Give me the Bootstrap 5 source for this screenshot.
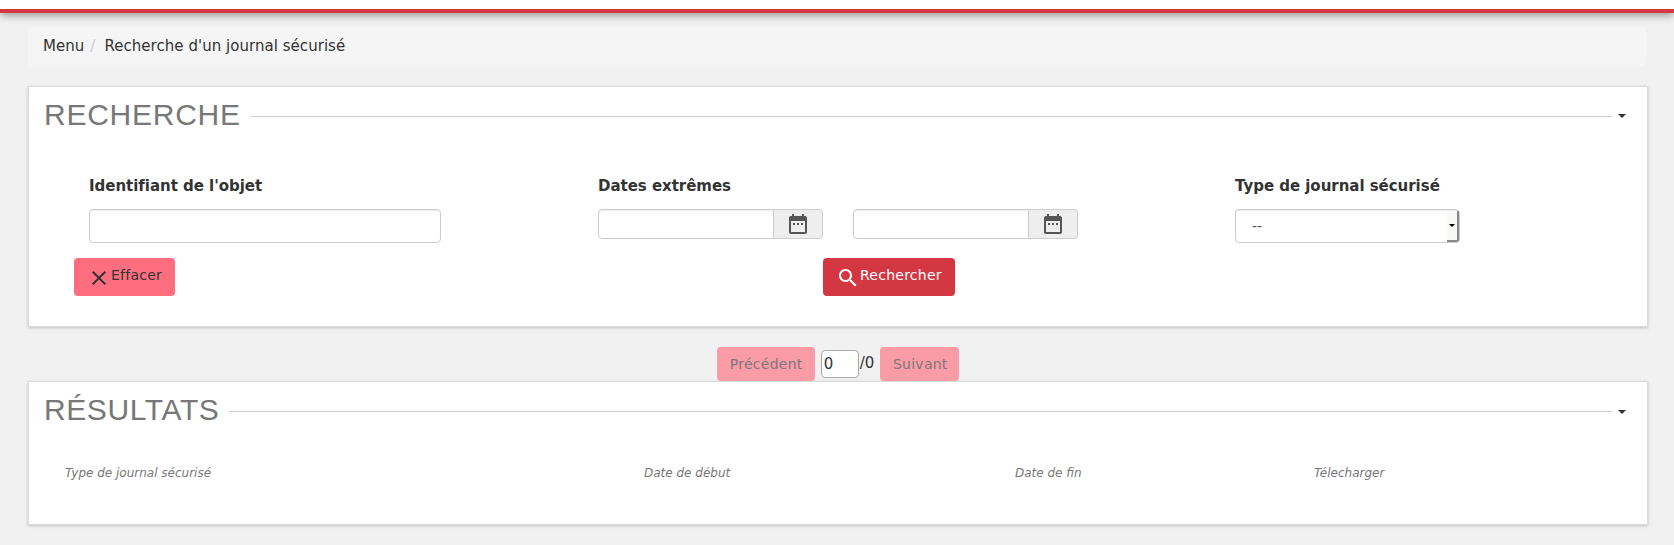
<!DOCTYPE html>
<html lang="fr">
<head>
<meta charset="utf-8">
<title>Recherche d'un journal sécurisé</title>
<link href="https://cdn.jsdelivr.net/npm/bootstrap@5.3.0/dist/css/bootstrap.min.css" rel="stylesheet">
<style>
body{background:#f1f1f1;color:#333;font:15px/20px "DejaVu Sans",sans-serif}
.topbar{height:13px;background:#fff;border-bottom:4px solid #d33742;box-shadow:0 2px 8px rgba(0,0,0,.4)}
.page{padding:14px 28px 20px}
.breadcrumb{--bs-breadcrumb-bg:#f5f5f5;--bs-breadcrumb-padding-x:15px;--bs-breadcrumb-border-radius:4px;height:39px;padding-top:9px;margin:0 0 21px;letter-spacing:.04px}
.breadcrumb-item+.breadcrumb-item{padding-left:6px}
.breadcrumb-item+.breadcrumb-item::before{color:#ccc;padding-right:9px}
.panel-box{background:#fff;margin:0 -1px 0 1px;box-shadow:0 0 0 1px #dcdcdc,0 1px 3px 1px rgba(0,0,0,.2)}
.panel-search{height:239px}
.panel-results{height:142px}
.panel-title{height:59px;padding:0 21px 0 15px}
.panel-title h2{font:30px/34px "Liberation Sans",Arial,sans-serif;letter-spacing:.75px;color:#777;margin:11px 10px 0 0}
.panel-results h2{letter-spacing:.6px}
.rule{height:1px;background:#ccc;margin-top:29px}
.toggle-caret{border:4px solid transparent;border-top-color:#333;border-bottom:0;margin:27px 0 0 6px}
.panel-results .toggle-caret{margin-top:28px}
.search-grid{display:grid;grid-template-columns:509px 255px 382px 225px;padding:30px 0 0 60px}
.search-grid label{font-weight:700;line-height:20px;margin-bottom:13px;letter-spacing:-.03px}
.form-control{border:1px solid #ccc;border-radius:4px;box-shadow:inset 0 1px 1px rgba(0,0,0,.075);padding:0}
.id-input{width:352px;height:34px}
.date-group{width:225px;height:30px}
.date-group .form-control{height:30px;min-height:0}
.date-group .input-group-text{width:50px;background:#eee;border-color:#ccc;border-radius:4px;padding:0;justify-content:center}
.type-select{width:225px;height:34px;font-size:14px;color:#555;display:flex;background:#fff;padding:0 0 0 16px;align-items:center;overflow:hidden}
.select-arrow{width:12px;height:31px;background:#f8f8f7;border-right:2px solid #888;border-bottom:2px solid #888;margin-left:auto}
.select-arrow i{border:3px solid transparent;border-top-color:#000;border-bottom:0}
.btn{font-size:14px;letter-spacing:.25px;border:0;border-radius:4px;line-height:20px;padding:0}
.btn-search,.btn-clear{height:38px;display:flex}
.btn-clear{width:101px;background:#ff6e7e;color:#333}
.btn-search{width:132px;background:#d33742;color:#fff}
.btn-search svg,.btn-clear svg{flex:none;margin:8px 0 0 13px}
.btn-search span,.btn-clear span{margin-top:7px}
.btn-row{margin:15px 0 0 45px;gap:648px}
.pager{height:56px;padding:21px 0 0 2px}
.pager .btn{height:34px;background:#fa9ca5;color:#82767a;padding-left:1px}
.btn-prev{width:98px}
.btn-next{width:79px}
.page-no{width:38px;height:28px;border:1px solid #aaa8a5;border-radius:4px;background:#fff;color:#333;padding:3px 2px;font-size:15px;margin:3px 1px 0 6px}
.page-total{margin:6px 6px 0 0}
.results-head{display:grid;grid-template-columns:579px 371px 299px 1fr;font-size:12px;font-style:italic;color:#777;padding:22px 0 0 36px}
</style>
</head>
<body>
<header class="topbar"></header>
<main class="page">
  <ol class="breadcrumb">
    <li class="breadcrumb-item">Menu</li>
    <li class="breadcrumb-item">Recherche d'un journal sécurisé</li>
  </ol>

  <section class="panel-box panel-search">
    <div class="panel-title d-flex align-items-start">
      <h2>RECHERCHE</h2><div class="rule flex-grow-1"></div><span class="toggle-caret"></span>
    </div>
    <div class="search-grid">
      <div><label class="d-block">Identifiant de l'objet</label><input class="form-control id-input"></div>
      <div><label class="d-block">Dates extrêmes</label>
        <div class="input-group date-group flex-nowrap"><input class="form-control"><span class="input-group-text">
          <svg width="24" height="24" viewBox="0 0 24 24" fill="#555"><path d="M9 11H7v2h2v-2zm4 0h-2v2h2v-2zm4 0h-2v2h2v-2zm2-7h-1V2h-2v2H8V2H6v2H5c-1.100 0-2 .9-2 2v14c0 1.100.9 2 2 2h14c1.100 0 2-.9 2-2V6c0-1.100-.9-2-2-2zm0 16H5V9h14v11z"/></svg></span></div>
      </div>
      <div><label class="d-block">&nbsp;</label>
        <div class="input-group date-group flex-nowrap"><input class="form-control"><span class="input-group-text">
          <svg width="24" height="24" viewBox="0 0 24 24" fill="#555"><path d="M9 11H7v2h2v-2zm4 0h-2v2h2v-2zm4 0h-2v2h2v-2zm2-7h-1V2h-2v2H8V2H6v2H5c-1.100 0-2 .9-2 2v14c0 1.100.9 2 2 2h14c1.100 0 2-.9 2-2V6c0-1.100-.9-2-2-2zm0 16H5V9h14v11z"/></svg></span></div>
      </div>
      <div><label class="d-block text-nowrap">Type de journal sécurisé</label>
        <div class="form-control type-select">--<span class="select-arrow d-flex align-items-center justify-content-center"><i></i></span></div>
      </div>
    </div>
    <div class="btn-row d-flex">
      <button class="btn btn-clear"><svg width="24" height="24" viewBox="0 0 24 24" fill="#333"><path d="M19 6.410L17.590 5 12 10.590 6.410 5 5 6.410 10.590 12 5 17.590 6.410 19 12 13.410 17.590 19 19 17.590 13.410 12z"/></svg><span>Effacer</span></button>
      <button class="btn btn-search"><svg width="24" height="24" viewBox="0 0 24 24" fill="#fff"><path d="M15.500 14h-.79l-.28-.27C15.410 12.590 16 11.110 16 9.500 16 5.910 13.090 3 9.500 3S3 5.910 3 9.500 5.910 16 9.500 16c1.610 0 3.090-.59 4.230-1.570l.27.28v.79l5 4.990L20.490 19l-4.990-5zm-6 0C7.010 14 5 11.990 5 9.500S7.010 5 9.500 5 14 7.010 14 9.500 11.990 14 9.500 14z"/></svg><span>Rechercher</span></button>
    </div>
  </section>

  <div class="pager d-flex justify-content-center align-items-start">
    <button class="btn btn-prev">Précédent</button>
    <input class="page-no" value="0"><span class="page-total">/0</span>
    <button class="btn btn-next">Suivant</button>
  </div>

  <section class="panel-box panel-results">
    <div class="panel-title d-flex align-items-start">
      <h2>RÉSULTATS</h2><div class="rule flex-grow-1"></div><span class="toggle-caret"></span>
    </div>
    <div class="results-head"><span>Type de journal sécurisé</span><span>Date de début</span><span>Date de fin</span><span>Télecharger</span></div>
  </section>
</main>
<script src="https://cdn.jsdelivr.net/npm/bootstrap@5.3.0/dist/js/bootstrap.bundle.min.js"></script>
</body>
</html>
